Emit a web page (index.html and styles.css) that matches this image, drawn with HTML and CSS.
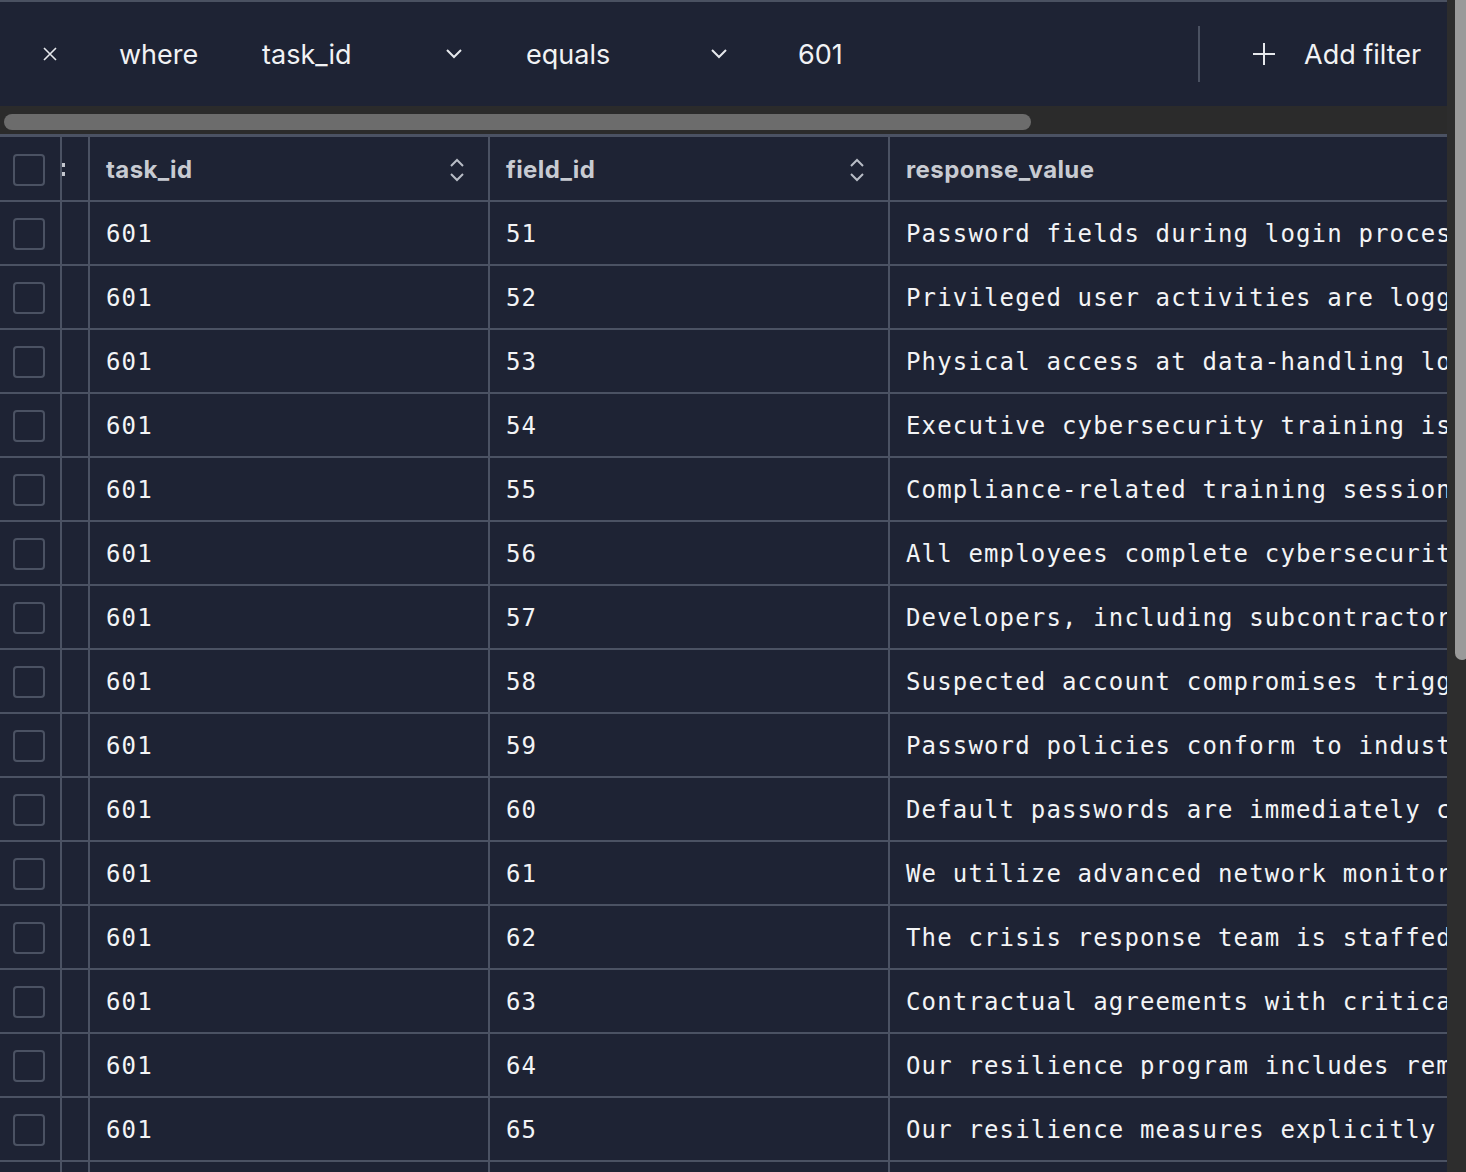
FILE: index.html
```html
<!DOCTYPE html>
<html>
<head>
<meta charset="utf-8">
<link rel="stylesheet" href="styles.css">
</head>
<body>
<div class="page">
  <div class="main">
    <div class="filterbar">
      <button class="close" aria-label="remove">
        <svg width="16" height="16" viewBox="0 0 16 16"><path d="M2 2 L14 14 M14 2 L2 14" stroke="#e6e8ec" stroke-width="1.6" fill="none"/></svg>
      </button>
      <span class="where">where</span>
      <div class="select field-select"><span>task_id</span>
        <svg width="18" height="12" viewBox="0 0 18 12"><path d="M2 2 L9 9 L16 2" stroke="#e6e8ec" stroke-width="2" fill="none"/></svg>
      </div>
      <div class="select op-select"><span>equals</span>
        <svg width="18" height="12" viewBox="0 0 18 12"><path d="M2 2 L9 9 L16 2" stroke="#e6e8ec" stroke-width="2" fill="none"/></svg>
      </div>
      <div class="value">601</div>
      <div class="divider"></div>
      <div class="add">
        <svg width="22" height="22" viewBox="0 0 22 22"><path d="M11 0 V22 M0 11 H22" stroke="#e6e8ec" stroke-width="2" fill="none"/></svg>
        <span>Add filter</span>
      </div>
    </div>
    <div class="hscroll"><div class="hthumb"></div></div>
    <div class="table">
      <div class="row head">
        <div class="cell chk"><span class="box"></span></div>
        <div class="cell narrow"><span class="grip"><i></i><i></i></span></div>
        <div class="cell col"><span>task_id</span>
          <svg class="sort" width="18" height="26" viewBox="0 0 18 26"><path d="M3 9 L9 3 L15 9 M3 17 L9 23 L15 17" stroke="#b9bdc6" stroke-width="2" fill="none"/></svg>
        </div>
        <div class="cell col"><span>field_id</span>
          <svg class="sort" width="18" height="26" viewBox="0 0 18 26"><path d="M3 9 L9 3 L15 9 M3 17 L9 23 L15 17" stroke="#b9bdc6" stroke-width="2" fill="none"/></svg>
        </div>
        <div class="cell resp"><span>response_value</span></div>
      </div>
      <div class="row"><div class="cell chk"><span class="box"></span></div><div class="cell narrow"></div><div class="cell col mono">601</div><div class="cell col mono">51</div><div class="cell resp mono">Password fields during login processes are masked and never stored in plain text.</div></div>
      <div class="row"><div class="cell chk"><span class="box"></span></div><div class="cell narrow"></div><div class="cell col mono">601</div><div class="cell col mono">52</div><div class="cell resp mono">Privileged user activities are logged and reviewed on a monthly basis.</div></div>
      <div class="row"><div class="cell chk"><span class="box"></span></div><div class="cell narrow"></div><div class="cell col mono">601</div><div class="cell col mono">53</div><div class="cell resp mono">Physical access at data-handling locations is restricted to authorized staff.</div></div>
      <div class="row"><div class="cell chk"><span class="box"></span></div><div class="cell narrow"></div><div class="cell col mono">601</div><div class="cell col mono">54</div><div class="cell resp mono">Executive cybersecurity training is conducted annually for all leadership.</div></div>
      <div class="row"><div class="cell chk"><span class="box"></span></div><div class="cell narrow"></div><div class="cell col mono">601</div><div class="cell col mono">55</div><div class="cell resp mono">Compliance-related training sessions are tracked and documented.</div></div>
      <div class="row"><div class="cell chk"><span class="box"></span></div><div class="cell narrow"></div><div class="cell col mono">601</div><div class="cell col mono">56</div><div class="cell resp mono">All employees complete cybersecurity awareness training upon hire.</div></div>
      <div class="row"><div class="cell chk"><span class="box"></span></div><div class="cell narrow"></div><div class="cell col mono">601</div><div class="cell col mono">57</div><div class="cell resp mono">Developers, including subcontractors, receive secure coding training.</div></div>
      <div class="row"><div class="cell chk"><span class="box"></span></div><div class="cell narrow"></div><div class="cell col mono">601</div><div class="cell col mono">58</div><div class="cell resp mono">Suspected account compromises trigger an immediate password reset.</div></div>
      <div class="row"><div class="cell chk"><span class="box"></span></div><div class="cell narrow"></div><div class="cell col mono">601</div><div class="cell col mono">59</div><div class="cell resp mono">Password policies conform to industry standards such as NIST 800-63.</div></div>
      <div class="row"><div class="cell chk"><span class="box"></span></div><div class="cell narrow"></div><div class="cell col mono">601</div><div class="cell col mono">60</div><div class="cell resp mono">Default passwords are immediately changed upon system deployment.</div></div>
      <div class="row"><div class="cell chk"><span class="box"></span></div><div class="cell narrow"></div><div class="cell col mono">601</div><div class="cell col mono">61</div><div class="cell resp mono">We utilize advanced network monitoring tools to detect anomalies.</div></div>
      <div class="row"><div class="cell chk"><span class="box"></span></div><div class="cell narrow"></div><div class="cell col mono">601</div><div class="cell col mono">62</div><div class="cell resp mono">The crisis response team is staffed around the clock.</div></div>
      <div class="row"><div class="cell chk"><span class="box"></span></div><div class="cell narrow"></div><div class="cell col mono">601</div><div class="cell col mono">63</div><div class="cell resp mono">Contractual agreements with critical vendors include security clauses.</div></div>
      <div class="row"><div class="cell chk"><span class="box"></span></div><div class="cell narrow"></div><div class="cell col mono">601</div><div class="cell col mono">64</div><div class="cell resp mono">Our resilience program includes remote failover capabilities.</div></div>
      <div class="row"><div class="cell chk"><span class="box"></span></div><div class="cell narrow"></div><div class="cell col mono">601</div><div class="cell col mono">65</div><div class="cell resp mono">Our resilience measures explicitly address ransomware scenarios.</div></div>
      <div class="row"><div class="cell chk"><span class="box"></span></div><div class="cell narrow"></div><div class="cell col mono">601</div><div class="cell col mono">66</div><div class="cell resp mono">Backups are tested quarterly to verify recovery objectives.</div></div>
    </div>
  </div>
  <div class="vscroll"><div class="vthumb"></div></div>
</div>
</body>
</html>
```

FILE: styles.css
```css
* { box-sizing: border-box; }
html, body { margin: 0; padding: 0; }
body {
  background: #1e2334;
  width: 1466px;
  height: 1172px;
  overflow: hidden;
  font-family: Inter, "Liberation Sans", sans-serif;
}
.page {
  display: flex;
  width: 1466px;
  height: 1172px;
}
.main {
  width: 1447px;
  flex: none;
  overflow: hidden;
  display: flex;
  flex-direction: column;
}
.filterbar {
  height: 106px;
  flex: none;
  border-top: 2px solid #4a5161;
  background: #1e2334;
  display: flex;
  align-items: center;
  color: #f1f2f4;
  font-size: 27px;
}
.close {
  width: 100px;
  height: 40px;
  background: none;
  border: none;
  padding: 0;
  display: flex;
  align-items: center;
  justify-content: center;
}
.where {
  margin-left: 19px;
  width: 143px;
}
.select {
  display: flex;
  align-items: center;
  justify-content: space-between;
}
.field-select { width: 201px; }
.op-select { width: 202px; margin-left: 63px; }
.value { margin-left: 70px; width: 400px; }
.divider {
  width: 2px;
  height: 56px;
  background: #4a5161;
}
.add {
  display: flex;
  align-items: center;
  margin-left: 53px;
  gap: 29px;
}
.hscroll {
  height: 28px;
  flex: none;
  background: #2b2b2b;
  padding: 8px 0 0 4px;
}
.hthumb {
  width: 1027px;
  height: 16px;
  border-radius: 8px;
  background: #6c6c6c;
}
.table {
  border-top: 3px solid #4b5263;
}
.row {
  display: flex;
  height: 64px;
  border-bottom: 2px solid #4b5263;
}
.row.head {
  height: 65px;
}
.cell {
  flex: none;
  display: flex;
  align-items: center;
  border-right: 2px solid #4b5263;
  white-space: nowrap;
  color: #f3f4f6;
  padding-top: 1px;
}
.head .cell {
  padding-top: 2px;
}
.chk {
  width: 62px;
  padding-left: 13px;
}
.box {
  width: 32px;
  height: 32px;
  border: 2px solid #4b5263;
  border-radius: 4px;
}
.narrow {
  width: 28px;
  position: relative;
}
.grip i {
  position: absolute;
  left: 0;
  width: 3px;
  height: 4px;
  background: #c4c7cf;
}
.grip i:first-child { top: 26px; }
.grip i:last-child { top: 35px; }
.col {
  width: 400px;
  padding-left: 16px;
  padding-right: 22px;
  justify-content: space-between;
}
.resp {
  flex: 1;
  min-width: 0;
  overflow: hidden;
  padding-left: 16px;
  border-right: none;
}
.head .cell {
  color: #c8cbd2;
  font-family: Inter, "Liberation Sans", sans-serif;
  font-weight: 700;
  font-size: 24px;
  letter-spacing: 0.4px;
}
.mono {
  font-family: "DejaVu Sans Mono", monospace;
  font-size: 24px;
  letter-spacing: 1.15px;
}
.vscroll {
  width: 19px;
  flex: none;
  background: #2d2d2d;
  padding-left: 8px;
}
.vthumb {
  width: 14px;
  height: 660px;
  background: #9a9a9a;
  border-radius: 0 0 7px 7px;
}
```
